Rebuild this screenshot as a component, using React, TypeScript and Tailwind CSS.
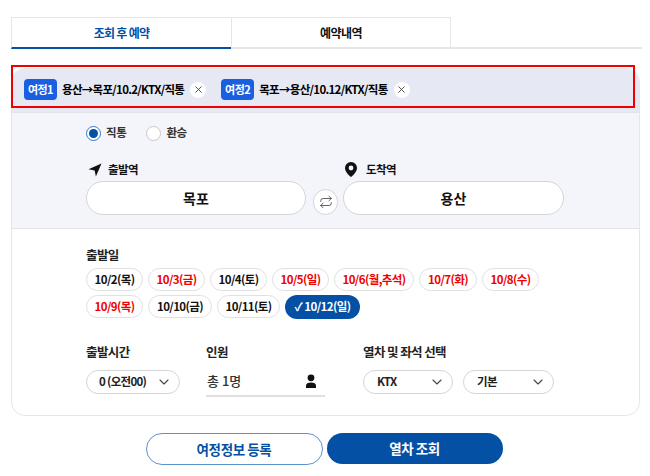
import * as React from "react";
import { ChevronDown, Repeat, X } from "lucide-react";

const dates = [
  { label: "10/2(목)", w: "w-[57px]" },
  { label: "10/3(금)", w: "w-[57px]", red: true },
  { label: "10/4(토)", w: "w-[57px]" },
  { label: "10/5(일)", w: "w-[57px]", red: true },
  { label: "10/6(월,추석)", w: "w-[80px]", red: true },
  { label: "10/7(화)", w: "w-[58px]", red: true },
  { label: "10/8(수)", w: "w-[57px]", red: true },
  { label: "10/9(목)", w: "w-[57px]", red: true },
  { label: "10/10(금)", w: "w-[64px]" },
  { label: "10/11(토)", w: "w-[63px]" },
];

function Trip({ tag, text }: { tag: string; text: string }) {
  return (
    <div className="flex items-center">
      <span className="flex h-[21px] w-[33px] items-center justify-center rounded-[4px] bg-[#1a5fe0] text-[11px] font-bold tracking-[-0.5px] text-white">
        {tag}
      </span>
      <span className="ml-[5px] text-[11.5px] font-bold tracking-[-0.7px] text-black">{text}</span>
      <span className="ml-[6px] flex h-4 w-4 items-center justify-center rounded-full bg-white">
        <X size={11} strokeWidth={1.8} className="text-[#333]" />
      </span>
    </div>
  );
}

function Select({ label, w, pl }: { label: string; w: string; pl: string }) {
  return (
    <div className={`flex h-[24px] items-center justify-between rounded-full border border-[#d5d5d5] bg-white pr-[7px] text-[11.5px] font-bold tracking-[-0.7px] text-[#222] ${w} ${pl}`}>
      {label}
      <ChevronDown size={16} strokeWidth={1.6} className="text-[#444]" />
    </div>
  );
}

export default function App() {
  return (
    <div className="h-[476px] w-[650px] overflow-hidden bg-white pl-[11px] pr-[8px] pt-[17px] font-['Noto_Sans_CJK_KR','Noto_Sans',sans-serif]">
      {/* tabs */}
      <div className="flex h-[32px] border-b-2 border-[#e6e6e6]">
        <div className="-mb-[2px] flex h-[32px] w-[220px] items-center justify-center border-b-2 border-l border-t border-[#e6e6e6] border-b-[#0350a4] text-[12px] font-bold tracking-[-0.7px] text-[#0350a4]">
          조회 후 예약
        </div>
        <div className="flex w-[220px] items-center justify-center border-l border-r border-t border-[#e6e6e6] text-[12px] font-bold tracking-[-0.6px] text-[#111]">
          예약내역
        </div>
      </div>

      {/* form card */}
      <div className="relative mt-[19px] h-[348px] w-[629px] rounded-[14px] border border-[#e6e6e6] bg-white">
        <div className="flex h-[43px] items-center gap-[15px] rounded-t-[14px] bg-[#e6e9f3] pb-[2px] pl-[12px]">
          <Trip tag="여정1" text="용산→목포/10.2/KTX/직통" />
          <Trip tag="여정2" text="목포→용산/10.12/KTX/직통" />
        </div>

        <div className="h-[117px] border-y border-[#e2e4ea] bg-[#f4f5fa] pl-[74px]">
          <div className="flex h-[40px] items-center text-[11.5px] font-bold tracking-[-0.4px] text-[#333]">
            <span className="flex h-[15px] w-[15px] items-center justify-center rounded-full border border-[#3b78c0] bg-white">
              <span className="h-[9px] w-[9px] rounded-full bg-[#0350a4]" />
            </span>
            <span className="ml-[5px]">직통</span>
            <span className="ml-[20px] h-[15px] w-[15px] rounded-full border border-[#c8c8c8] bg-white" />
            <span className="ml-[5px]">환승</span>
          </div>

          <div className="mt-[5px] flex">
            <div className="w-[220px]">
              <div className="flex h-[23px] items-center pl-[2px] text-[11.5px] font-bold tracking-[-0.6px] text-[#111]">
                <svg width="14" height="14" viewBox="0 0 14 14"><path d="M13.5.5 .5 6.2 6.6 7.4 7.9 13.5Z" fill="#111" /></svg>
                <span className="ml-[6px]">출발역</span>
              </div>
              <div className="flex h-[34px] items-center justify-center rounded-full border border-[#d5d5d5] bg-white text-[14px] font-bold text-[#111]">
                목포
              </div>
            </div>
            <div className="ml-[7px] mr-[5px] mt-[31px] flex h-[26px] w-[25px] items-center justify-center rounded-full border border-[#d5d5d5] bg-white">
              <Repeat size={14} strokeWidth={1.3} className="text-[#333]" />
            </div>
            <div className="w-[221px]">
              <div className="flex h-[23px] items-center pl-[2px] text-[11.5px] font-bold tracking-[-0.6px] text-[#111]">
                <svg width="12" height="15" viewBox="0 0 12 15"><path fillRule="evenodd" d="M6 0a6 6 0 0 1 6 6c0 3.6-3.4 6.8-6 9-2.6-2.2-6-5.4-6-9a6 6 0 0 1 6-6Zm0 3.6a2.4 2.4 0 1 0 0 4.8 2.4 2.4 0 0 0 0-4.8Z" fill="#111" /></svg>
                <span className="ml-[9px]">도착역</span>
              </div>
              <div className="flex h-[34px] items-center justify-center rounded-full border border-[#d5d5d5] bg-white text-[14px] font-bold text-[#111]">
                용산
              </div>
            </div>
          </div>
        </div>

        <div className="pl-[74px] pt-[17px]">
          <div className="text-[12.5px] font-bold leading-[18px] tracking-[-0.6px] text-[#222]">출발일</div>
          <div className="mt-[4px] flex w-[470px] flex-wrap gap-x-[5px] gap-y-[4px]">
            {dates.map((d) => (
              <span
                key={d.label}
                className={`flex h-[23px] items-center justify-center rounded-full border border-[#e0e0e0] bg-white text-[11.5px] font-bold tracking-[-0.6px] ${d.w} ${d.red ? "text-[#f00000]" : "text-[#111]"}`}
              >
                {d.label}
              </span>
            ))}
            <span className="flex h-[24px] w-[75px] items-center justify-center rounded-full bg-[#0350a4] text-[11.5px] font-bold tracking-[-0.6px] text-white">
              ✓ 10/12(일)
            </span>
          </div>

          <div className="mt-[24px] flex">
            <div className="w-[120px]">
              <div className="text-[12.5px] font-bold leading-[18px] tracking-[-0.6px] text-[#222]">출발시간</div>
              <div className="mt-[9px]"><Select label="0 (오전00)" w="w-[94px]" pl="pl-[12px]" /></div>
            </div>
            <div className="w-[157px]">
              <div className="text-[12.5px] font-bold leading-[18px] tracking-[-0.6px] text-[#222]">인원</div>
              <div className="mt-[5px] flex h-[31px] w-[119px] items-center justify-between border-b-2 border-[#e0e0e0] pl-[1px] pr-[8px] text-[13px] font-medium text-[#333]">
                총 1명
                <svg width="12" height="14" viewBox="0 0 12 14" fill="#111"><circle cx="6" cy="3.8" r="3.4" /><path d="M1 14v-2.6C1 9.4 3 8.4 6 8.4s5 1 5 3V14Z" /></svg>
              </div>
            </div>
            <div>
              <div className="text-[12.5px] font-bold leading-[18px] tracking-[-0.6px] text-[#222]">열차 및 좌석 선택</div>
              <div className="mt-[9px] flex gap-[10px]">
                <Select label="KTX" w="w-[90px]" pl="pl-[13px]" />
                <Select label="기본" w="w-[91px]" pl="pl-[13px]" />
              </div>
            </div>
          </div>
        </div>

        {/* highlight box over the trip bar */}
        <div className="absolute -left-px -top-[4px] h-[43px] w-[624px] border-2 border-[#f00000]" />
      </div>

      <div className="mt-[17px] flex justify-center gap-[4px] pr-[5px]">
        <div className="flex h-[32px] w-[177px] items-center justify-center rounded-full border border-[#5b93cc] bg-white text-[13.5px] font-bold tracking-[-0.4px] text-[#0350a4]">
          여정정보 등록
        </div>
        <div className="flex h-[31px] w-[176px] items-center justify-center rounded-full bg-[#0350a4] text-[13.5px] font-bold tracking-[-0.4px] text-white">
          열차 조회
        </div>
      </div>
    </div>
  );
}
